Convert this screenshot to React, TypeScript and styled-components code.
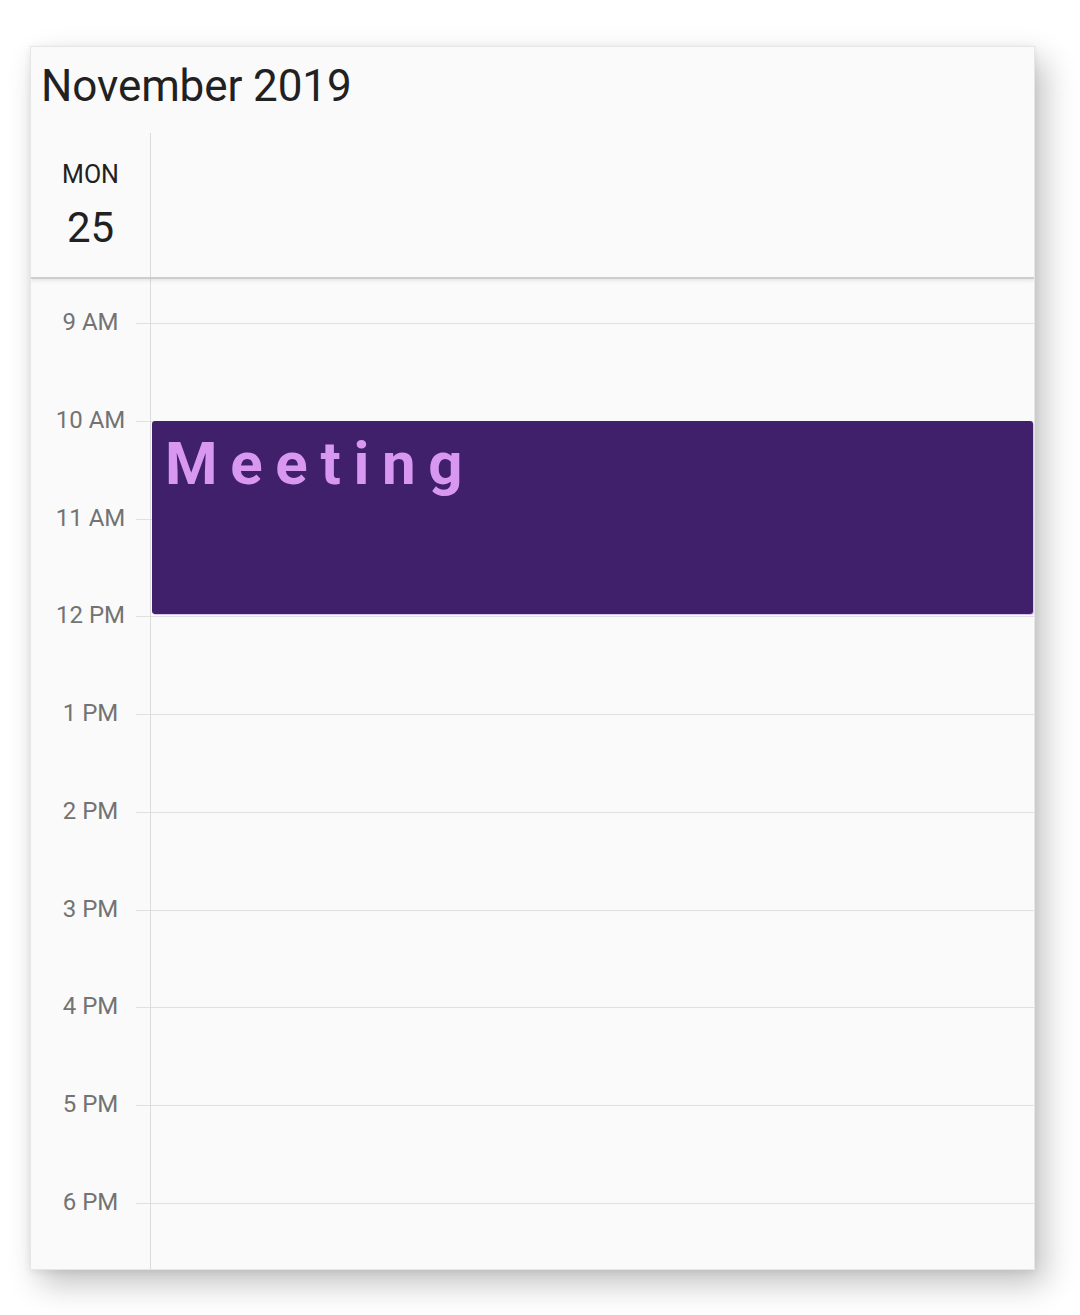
import React from "react";
import styled, { createGlobalStyle } from "styled-components";

const GlobalStyle = createGlobalStyle`
  html, body { margin: 0; padding: 0; background: #ffffff; }
  body { font-family: Roboto, "Noto Sans", Arial, sans-serif; }
`;

const Page = styled.div`
  padding: 46px 0 0 30px;
  height: 1315px;
  box-sizing: border-box;
  overflow: hidden;
`;

const Card = styled.div`
  width: 1005px;
  height: 1224px;
  box-sizing: border-box;
  background: #fafafa;
  border: 1px solid #e6e6e6;
  box-shadow: 10px 14px 30px rgba(0, 0, 0, 0.24), 0 2px 8px rgba(0, 0, 0, 0.08);
  display: flex;
  flex-direction: column;
  overflow: hidden;
`;

const Title = styled.div`
  height: 86px;
  box-sizing: border-box;
  padding: 13px 0 0 10px;
  font-size: 44px;
  line-height: 52px;
  color: #212121;
  letter-spacing: -0.1px;
`;

const DayHeader = styled.div`
  display: grid;
  grid-template-columns: 120px 1fr;
  height: 146px;
  box-sizing: border-box;
  border-bottom: 2px solid #cdcdcd;
  box-shadow: 0 2px 3px rgba(0, 0, 0, 0.08);
  position: relative;
  z-index: 1;
`;

const DayCell = styled.div`
  border-right: 1px solid #dadada;
  display: flex;
  flex-direction: column;
  align-items: center;
  padding-top: 26px;
`;

const DayName = styled.div`
  font-size: 25px;
  line-height: 32px;
  color: #212121;
`;

const DayNumber = styled.div`
  font-size: 42px;
  line-height: 50px;
  margin-top: 12px;
  color: #212121;
`;

const Body = styled.div`
  flex: 1;
  display: grid;
  grid-template-columns: 120px 1fr;
  overflow: hidden;
`;

const TimeAxis = styled.div`
  padding-top: 44px;
  border-right: 1px solid #dadada;
`;

const HOUR = 97.75;

const TimeSlot = styled.div`
  height: ${HOUR}px;
  position: relative;
  &::after {
    content: "";
    position: absolute;
    right: 0;
    top: 0;
    width: 14px;
    height: 1px;
    background: #e0e0e0;
  }
`;

const TimeLabel = styled.span`
  position: absolute;
  left: 0;
  right: 0;
  top: 0;
  transform: translateY(-54%);
  text-align: center;
  font-size: 24px;
  line-height: 28px;
  color: #737373;
`;

const DayColumn = styled.div`
  position: relative;
  padding-top: 44px;
`;

const HourLine = styled.div`
  height: ${HOUR}px;
  box-sizing: border-box;
  border-top: 1px solid #e0e0e0;
`;

const Event = styled.div<{ $top: number; $height: number }>`
  position: absolute;
  left: 1px;
  right: 1px;
  top: ${(p) => p.$top}px;
  height: ${(p) => p.$height}px;
  background: #40206a;
  border-radius: 3px;
  box-shadow: 1px 1px 0 rgba(190, 160, 230, 0.6);
  box-sizing: border-box;
  padding: 8px 0 0 13px;
`;

const EventTitle = styled.div`
  font-size: 60px;
  line-height: 70px;
  font-weight: 700;
  letter-spacing: 12.7px;
  color: #d898f2;
`;

const hours = ["9 AM", "10 AM", "11 AM", "12 PM", "1 PM", "2 PM", "3 PM", "4 PM", "5 PM", "6 PM"];

export default function App() {
  return (
    <>
      <GlobalStyle />
      <Page>
        <Card>
          <Title>November 2019</Title>
          <DayHeader>
            <DayCell>
              <DayName>MON</DayName>
              <DayNumber>25</DayNumber>
            </DayCell>
            <div />
          </DayHeader>
          <Body>
            <TimeAxis>
              {hours.map((h) => (
                <TimeSlot key={h}>
                  <TimeLabel>{h}</TimeLabel>
                </TimeSlot>
              ))}
            </TimeAxis>
            <DayColumn>
              {hours.map((h) => (
                <HourLine key={h} />
              ))}
              <Event $top={44 + HOUR} $height={193}>
                <EventTitle>Meeting</EventTitle>
              </Event>
            </DayColumn>
          </Body>
        </Card>
      </Page>
    </>
  );
}
